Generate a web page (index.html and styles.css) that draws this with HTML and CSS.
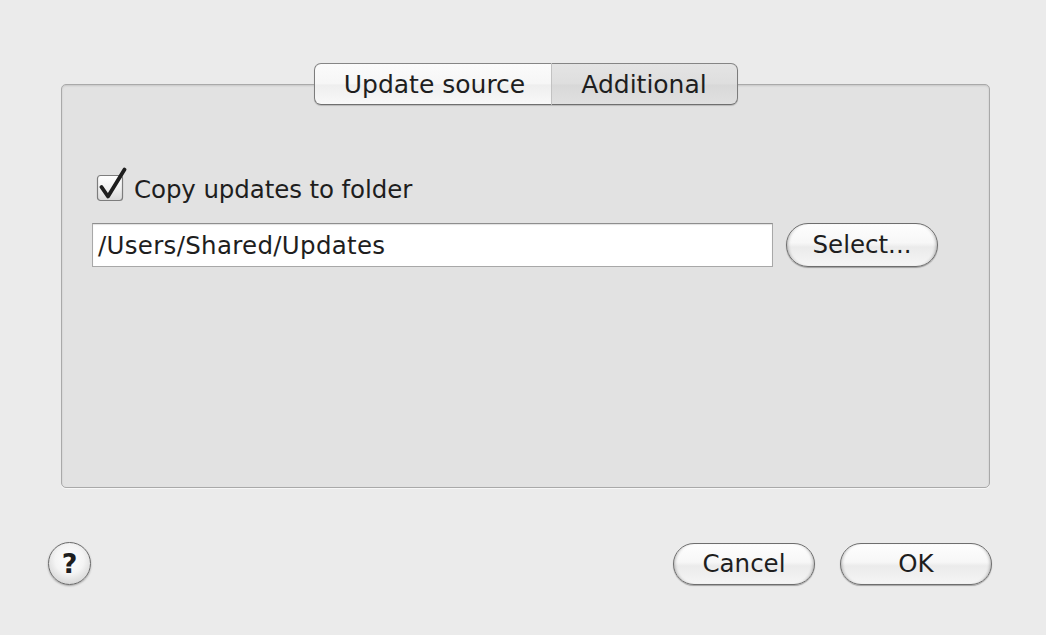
FILE: index.html
```html
<!DOCTYPE html>
<html>
<head>
<meta charset="utf-8">
<link rel="stylesheet" href="styles.css">
</head>
<body>
<div class="dialog">
  <div class="tabview">
    <div class="tabs">
      <div class="tab tab-first">Update source</div>
      <div class="tab tab-selected">Additional</div>
    </div>
    <div class="panel">
      <label class="check-row">
        <svg class="checkbox" width="32" height="36" viewBox="0 0 32 36">
          <defs>
            <linearGradient id="cb" x1="0" y1="0" x2="0" y2="1">
              <stop offset="0" stop-color="#ffffff"/>
              <stop offset="0.5" stop-color="#f1f1f1"/>
              <stop offset="1" stop-color="#d9d9d9"/>
            </linearGradient>
          </defs>
          <rect x="1.5" y="8.5" width="25" height="25" rx="3" fill="url(#cb)" stroke="#7d7d7d" stroke-width="1.2"/>
          <path d="M5.5 20 L12 29.5 L28.5 2.5" fill="none" stroke="#1e1e1e" stroke-width="3.8" stroke-linecap="round" stroke-linejoin="round"/>
        </svg>
        <span>Copy updates to folder</span>
      </label>
      <div class="path-row">
        <div class="field">/Users/Shared/Updates</div>
        <div class="button select">Select...</div>
      </div>
    </div>
  </div>
  <div class="footer">
    <div class="help">?</div>
    <div class="spacer"></div>
    <div class="button cancel">Cancel</div>
    <div class="button ok">OK</div>
  </div>
</div>
</body>
</html>
```

FILE: styles.css
```css
html, body {
  margin: 0;
  background: #ebebeb;
}
body {
  font-family: "DejaVu Sans", "Noto Sans", sans-serif;
  font-size: 24.5px;
  color: #1e1e1e;
}
.dialog {
  width: 1046px;
  height: 635px;
  box-sizing: border-box;
  padding: 63px 54px 0 48px;
  display: flex;
  flex-direction: column;
}
.tabview {
  margin: 0 2px 0 13px;
}
.tabs {
  display: flex;
  justify-content: center;
  position: relative;
  z-index: 1;
  height: 42px;
}
.tab {
  height: 42px;
  box-sizing: border-box;
  display: flex;
  align-items: center;
  justify-content: center;
  border-top: 1px solid #858585;
  border-bottom: 1px solid #6f6f6f;
  box-shadow: 0 1px 1px rgba(0,0,0,0.18);
  font-size: 25px;
}
.tab-first {
  width: 238px;
  border-left: 1px solid #7c7c7c;
  border-right: 1px solid #c6c6c6;
  border-radius: 7px 0 0 7px;
  background: linear-gradient(#fbfbfb, #f6f6f6 50%, #eeeeee 52%, #f8f8f8);
  padding-left: 4px;
}
.tab-selected {
  width: 186px;
  border-right: 1px solid #7c7c7c;
  border-radius: 0 7px 7px 0;
  background: linear-gradient(#e4e4e4, #dedede 50%, #d8d8d8 52%, #e0e0e0);
}
.panel {
  margin-top: -21px;
  height: 404px;
  box-sizing: border-box;
  background: #e2e2e2;
  border: 1px solid #a9a9a9;
  border-radius: 5px;
  box-shadow: inset 0 1px 2px rgba(0,0,0,0.12), 0 1px 0 rgba(255,255,255,0.6);
  padding: 82px 51px 0 30px;
}
.check-row {
  display: flex;
  align-items: center;
  height: 36px;
  margin-left: 4px;
}
.checkbox {
  display: block;
  margin-right: 6px;
}
.check-row span {
  padding-top: 8px;
  letter-spacing: -0.1px;
}
.path-row {
  display: flex;
  margin-top: 20px;
  height: 44px;
}
.field {
  width: 681px;
  height: 44px;
  box-sizing: border-box;
  background: #ffffff;
  border: 1px solid #a8a8a8;
  border-top-color: #8e8e8e;
  box-shadow: inset 0 1px 1px rgba(0,0,0,0.12);
  padding-left: 5px;
  display: flex;
  align-items: center;
  letter-spacing: 0.3px;
}
.button {
  height: 42px;
  box-sizing: border-box;
  border: 1px solid #6e6e6e;
  border-radius: 21px;
  background: linear-gradient(#fefefe, #f7f7f7 45%, #ebebeb 55%, #f5f5f5);
  box-shadow: inset 3px 0 3px -2px rgba(0,0,0,0.25), inset -3px 0 3px -2px rgba(0,0,0,0.25), 0 1px 1px rgba(0,0,0,0.3);
  display: flex;
  align-items: center;
  justify-content: center;
  padding-bottom: 1px;
}
.select {
  width: 152px;
  height: 44px;
  border-radius: 22px;
  margin-left: 13px;
}
.footer {
  display: flex;
  align-items: center;
  margin-top: 53px;
  height: 45px;
}
.spacer {
  flex: 1;
}
.help {
  width: 43px;
  height: 43px;
  box-sizing: border-box;
  border-radius: 50%;
  border: 1px solid #6a6a6a;
  background: radial-gradient(circle at 50% 40%, #ffffff 0%, #f4f4f4 45%, #c4c4c4 100%);
  box-shadow: 0 1px 2px rgba(0,0,0,0.3);
  display: flex;
  align-items: center;
  justify-content: center;
  font-weight: bold;
  font-size: 27px;
  color: #1e1e1e;
}
.cancel {
  width: 142px;
}
.ok {
  width: 152px;
  margin-left: 25px;
}
```
